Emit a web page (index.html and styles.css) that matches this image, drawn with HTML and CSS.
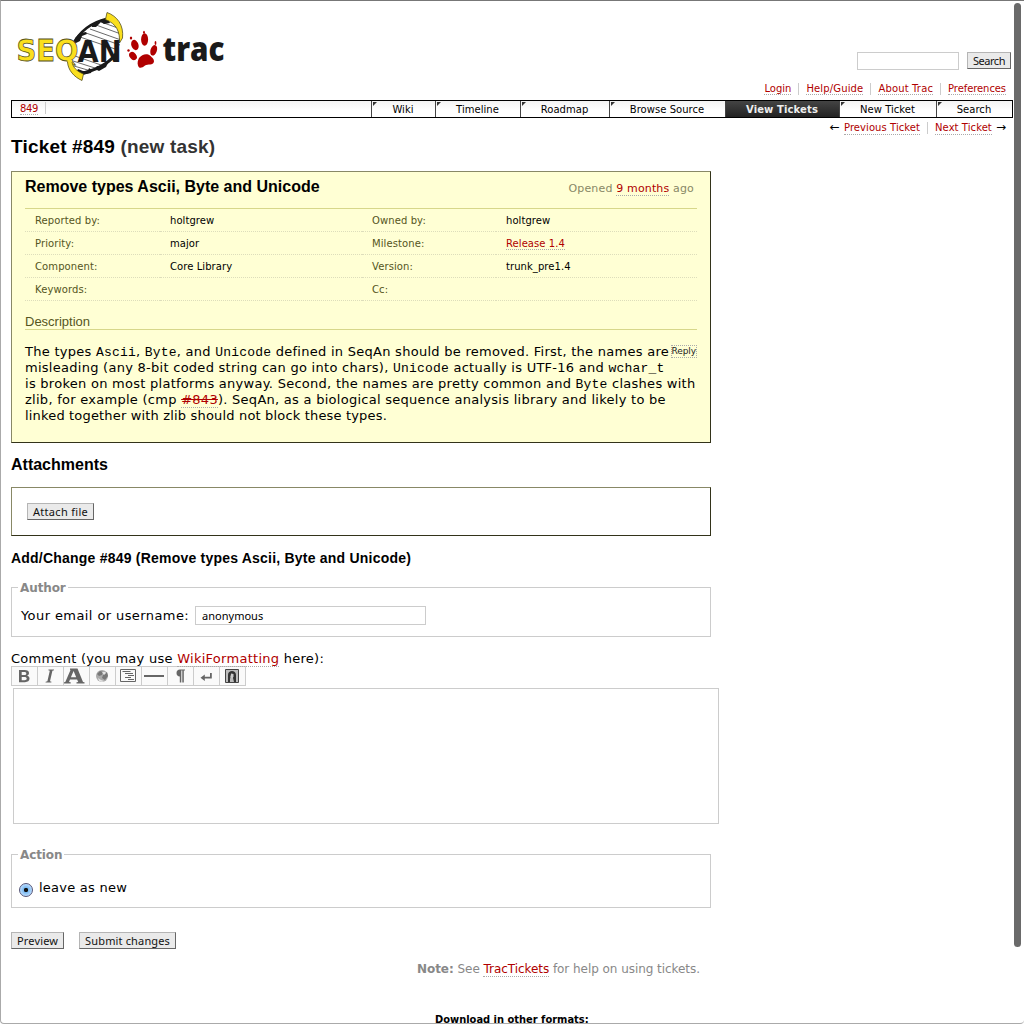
FILE: index.html
```html
<!DOCTYPE html>
<html lang="en">
<head>
<meta charset="utf-8">
<title>#849 (Remove types Ascii, Byte and Unicode)</title>
<link rel="stylesheet" href="styles.css">
</head>
<body>
<div class="page">
  <header class="header">
    <svg class="logo" width="216" height="74" viewBox="14 10 216 74">
      <path d="M107 18C88 23 74 36 70 50C67 60 70 68 80 74C100 69 116 56 120 42C122 30 117 22 107 18Z" fill="#fff"/>
      <path d="M86 33l34 12M90 29l31 11M96 25l25 9M101 22l17 6M80 37l38 13M72 55l32 11M70 60l28 9M74 66l17 5" stroke="#444" stroke-width=".8" fill="none"/>
      <path d="M108 18.500C92 22 79 32 72 46" stroke="#1a1a1a" stroke-width="2.600" fill="none"/>
      <path d="M78 74C95 71 108 64 116 54" stroke="#1a1a1a" stroke-width="3" fill="none"/>
      <path d="M91 25l9-5 8-2 2 5-6 1-3-2-5 5-4 0ZM75 38l5-5 6-1 1 2-5 2-2 5-6 3ZM75 74l3-5 5 2 5 0 1-3 3 2-1 3-9 2ZM95 69l2-3 5 0 2-3 4 0-2 4-7 4Z" fill="#1a1a1a"/>
      <path d="M107 12.500C117 16 124 25 122.500 38L119.500 43C120 32 117 24 105.500 19.500Z" fill="#fadf1d" stroke="#55511f" stroke-width=".8"/>
      <text class="logo-seq" x="16.500" y="61.300" textLength="62" lengthAdjust="spacingAndGlyphs">SEQ</text>
      <path d="M67.500 59.500C67 69 73 77 82 80.500L83.500 74C76 71 72 66 72 60Z" fill="#fadf1d"/>
      <path d="M67.500 62C68 70 74 77 82 80.500L83.500 74C76 71 73 67 72 62" fill="none" stroke="#55511f" stroke-width=".8"/>
      <text class="logo-an" x="77.500" y="61.500" textLength="44" lengthAdjust="spacingAndGlyphs">AN</text>
      <g fill="#b00000">
        <ellipse cx="144.600" cy="39.500" rx="3.500" ry="6.200"/>
        <ellipse cx="134.900" cy="45" rx="3.600" ry="5.300" transform="rotate(-18 134.900 45)"/>
        <ellipse cx="153.700" cy="50.300" rx="3.200" ry="5.400" transform="rotate(18 153.700 50.300)"/>
        <ellipse cx="133" cy="56" rx="3.300" ry="4.500" transform="rotate(-38 133 56)"/>
        <path d="M139 58C142 54 147 53 150 55.500C151 57 154 58 154 61.500C153 66 148 63.500 145 65.500C142 68 139 69 138 65.500C137 63 138 60 139 58Z"/>
        <ellipse cx="144" cy="32.300" rx=".9" ry="1.500"/><ellipse cx="131" cy="38" rx="1.200" ry="1.600"/><ellipse cx="155.500" cy="43" rx=".9" ry="2"/><ellipse cx="128.500" cy="50.500" rx="1.200" ry="1.300"/>
      </g>
      <text class="logo-trac" x="162.500" y="61.300" textLength="62" lengthAdjust="spacingAndGlyphs">trac</text>
    </svg>
    <div class="header-right">
      <form class="search"><input class="search-field" type="text" aria-label="Search"><button class="btn find" type="button">Search</button></form>
      <ul class="metanav">
        <li><a>Login</a></li><li><a class="ls-15">Help/Guide</a></li><li><a class="ls-15">About Trac</a></li><li><a class="ls-neg">Preferences</a></li>
      </ul>
    </div>
  </header>
  <nav class="mainnav">
    <div class="crumb"><a>849</a></div>
    <div class="tab w-wiki">Wiki</div>
    <div class="tab w-time">Timeline</div>
    <div class="tab w-road">Roadmap</div>
    <div class="tab w-src">Browse Source</div>
    <div class="tab w-view active">View Tickets</div>
    <div class="tab w-new">New Ticket</div>
    <div class="tab w-find">Search</div>
  </nav>
  <div class="ctxtnav"><span class="arrow">←</span><a>Previous Ticket</a><i></i><a>Next Ticket</a><span class="arrow">→</span></div>
  <main class="content">
    <h1 class="title">Ticket #849 <span class="status">(new task)</span></h1>
    <section class="ticket">
      <div class="ticket-head"><h2 class="summary">Remove types Ascii, Byte and Unicode</h2><p class="date">Opened <a>9 months</a> ago</p></div>
      <dl class="props">
        <dt>Reported by:</dt><dd>holtgrew</dd><dt>Owned by:</dt><dd>holtgrew</dd>
        <dt>Priority:</dt><dd>major</dd><dt>Milestone:</dt><dd><a>Release 1.4</a></dd>
        <dt>Component:</dt><dd>Core Library</dd><dt>Version:</dt><dd>trunk_pre1.4</dd>
        <dt>Keywords:</dt><dd></dd><dt>Cc:</dt><dd></dd>
      </dl>
      <h3 class="desc-title">Description</h3>
      <div class="desc">
        <button class="reply" type="button">Reply</button>
        <p>The types <code>Ascii</code>, <code>Byte</code>, and <code>Unicode</code> defined in SeqAn should be removed. First, the names are<br>
        misleading (any 8-bit coded string can go into chars), <code>Unicode</code> actually is UTF-16 and <code>wchar_t</code><br>
        is broken on most platforms anyway. Second, the names are pretty common and <code>Byte</code> clashes with<br>
        zlib, for example (cmp <a class="closed">#843</a>). SeqAn, as a biological sequence analysis library and likely to be<br>
        <span class="last-line">linked together with zlib should not block these types.</span></p>
      </div>
    </section>
    <h2 class="section-title">Attachments</h2>
    <section class="attachments"><button class="btn attach" type="button">Attach file</button></section>
    <h2 class="change-title">Add/Change #849 (Remove types Ascii, Byte and Unicode)</h2>
    <fieldset class="group author"><legend>Author</legend><label class="user-label">Your email or username:</label><input class="user-field" type="text" value="anonymous" aria-label="User"></fieldset>
    <p class="comment-label">Comment (you may use <a>WikiFormatting</a> here):</p>
    <div class="toolbar">
      <span><svg viewBox="0 0 25 18"><path fill-rule="evenodd" d="M7 3h5.500c3 0 4.500 1 4.500 3 0 1.500-.8 2.300-2 2.700 1.600.3 2.500 1.300 2.500 2.900 0 2.300-1.700 3.600-4.500 3.600H7ZM9.700 5v3h2.300c1.600 0 2.300-.5 2.300-1.500s-.7-1.500-2-1.500ZM9.700 9.900v3.400h2.800c1.500 0 2.200-.6 2.200-1.700s-.8-1.700-2.300-1.700Z"/></svg></span>
      <span><svg viewBox="0 0 25 18"><path d="M10.500 2.500h5.500v.8l-1.600.4-2.400 10.600 1.500.4-.2.800H7.500l.2-.8 1.700-.4 2.400-10.600-1.500-.4Z"/></svg></span>
      <span><svg viewBox="0 0 25 18"><path fill-rule="evenodd" d="M6 1.500h7.500l5.500 13.500 1.500.3v1.200h-8v-1.200l1.700-.3-1.100-2.500H6l-1 2.500 1.700.3v1.200H0v-1.200l1.300-.3L6.500 3 6 2.700ZM9.600 4l-2.700 6.300h5.300Z"/></svg></span>
      <span><svg viewBox="0 0 25 18"><circle cx="12" cy="9" r="6" fill="#aaa"/><path d="M7 7l3-3 3 1-1 3-3 1ZM13 8l4-3 1 4-3 4-3-2Z" fill="#777"/><path d="M8 11l3 2 3 1-2 1-3-1ZM12 5l3 0 1 1-2 2Z" fill="#e3e3e3"/></svg></span>
      <span><svg viewBox="0 0 25 18"><path d="M4.500 2.500h15v12h-15ZM6.500 4.500h8M9 6.500h8M12 8.500h6M9 10.500h6M12 12.500h6" fill="none" stroke="#666"/></svg></span>
      <span><svg viewBox="0 0 25 18"><path d="M2 8h20v2H2Z"/></svg></span>
      <span><svg viewBox="0 0 25 18"><path d="M12 2.500h5v1h-1.200v12h-1.500V3.500h-1v12h-1.500v-6C9.800 9.500 8.500 8 8.500 6S9.800 2.500 12 2.500Z"/></svg></span>
      <span><svg viewBox="0 0 25 18"><path d="M16 6h1.800v5.500h-7v2.500L6.500 10.700l4.300-3.200v2.300h5.200Z"/></svg></span>
      <span><svg viewBox="0 0 25 18"><path d="M5.500 2.500h13v13h-13Z" fill="#bbb" stroke="#444"/><path d="M8 15V8c0-3 2-4 4-4s4 1.500 4 4v7h-2l-1-4v-3h-2l-1 4v3Z" fill="#333"/><path d="M11 6.500l2.500.5v3l-1.500 1-1.500-1Z" fill="#ccc"/></svg></span>
    </div>
    <textarea class="comment" aria-label="Comment"></textarea>
    <fieldset class="group action"><legend>Action</legend><span class="radio"></span><label class="radio-label">leave as new</label></fieldset>
    <div class="buttons"><button class="btn" type="button">Preview</button><button class="btn" type="button">Submit changes</button></div>
  </main>
  <p class="help"><strong>Note:</strong> See <a>TracTickets</a> for help on using tickets.</p>
  <h3 class="formats">Download in other formats:</h3>
  <div class="scrollbar"></div>
</div>
</body>
</html>
```
FILE: styles.css
```css
* { box-sizing: border-box; }
body { margin: 0; background: #fff; color: #000; font: 13px/16px "DejaVu Sans", sans-serif; }
h1, h2, h3, p, ul, dl, dd { margin: 0; padding: 0; }
button, input { font-family: inherit; }
.page { position: relative; width: 1024px; height: 1024px; overflow: hidden; border: solid #aaa; border-width: 1px 0 1px 1px; border-top-color: #777; border-radius: 0 0 4px 4px; padding: 0 11px 0 10px; white-space: nowrap; }
a { color: #b00000; border-bottom: 1px dotted #aaa; }
.ls-15 { letter-spacing: .15px; }
.ls-neg { letter-spacing: -.08px; }
.header { display: flex; justify-content: space-between; height: 99px; }
.logo { margin: 9px 0 0 3px; overflow: visible; }
.logo-seq, .logo-an { font: bold 30px "DejaVu Sans", sans-serif; }
.logo-seq { fill: #fadf1d; stroke: #55511f; stroke-width: .8px; }
.logo-an { fill: #1a1a1a; }
.logo-trac { font: 800 34px "Open Sans", sans-serif; fill: #1a1a1a; }
.header-right { padding: 51px 2px 0 0; }
.search { display: flex; justify-content: flex-end; gap: 8px; height: 18px; }
.search-field { width: 102px; height: 18px; border: 1px solid #ccc; padding: 0; }
.btn { height: 17px; padding: 0 5px; border: 1px solid; border-color: #b5b5b5 #666 #666 #b5b5b5; background: #eaeaea; color: #111; font: 11px/14px "Noto Sans", sans-serif; letter-spacing: .15px; }
.find { letter-spacing: -.45px; }
.attach { letter-spacing: .3px; }
.metanav { display: flex; justify-content: flex-end; list-style: none; font-size: 10px; line-height: 11px; margin-top: 13px; padding-right: 5px; }
.metanav li { padding: 0 7px; border-left: 1px solid #ccc; height: 12px; }
.metanav li:first-child { border: 0; }
.metanav li:last-child { padding-right: 0; }
.mainnav { display: flex; width: 1002px; height: 18px; border: 1px solid #000; font-size: 10px; line-height: 17px; letter-spacing: .04px; background: linear-gradient(#f3f3f3, #fff 60%); }
.crumb { flex: 1; display: flex; }
.crumb a { margin: 2px 7px 0 8px; height: 12px; line-height: 11px; letter-spacing: -.3px; }
.crumb::after { content: ""; border-left: 1px solid #ccc; height: 12px; margin-top: 1px; }
.tab { position: relative; padding-right: 1px; border-left: 1px solid #444; text-align: center; }
.tab::before { content: ""; position: absolute; left: 1px; top: 1px; width: 0; height: 0; border-top: 4px solid #333; border-right: 4px solid transparent; }
.w-wiki { width: 64px; } .w-time { width: 85px; } .w-road { width: 89px; } .w-src { width: 116px; } .w-view { width: 114px; } .w-new { width: 97px; } .w-find { width: 76px; }
.active { background: linear-gradient(#444, #222); color: #eee; font-weight: bold; letter-spacing: .12px; }
.active::before { display: none; }
.ctxtnav { display: flex; justify-content: flex-end; height: 17px; padding: 4px 3px 0 0; font-size: 10px; line-height: 11px; letter-spacing: .07px; }
.ctxtnav a { height: 13px; }
.ctxtnav i { border-left: 1px solid #ccc; margin: 0 7px; height: 12px; }
.arrow { margin: 0 4px; font-size: 12px; }
.title { font: bold 19px/24px "Liberation Sans", Arial, sans-serif; letter-spacing: .18px; height: 36px; }
.status { color: #333; }
.ticket { width: 700px; height: 272px; border: 1px solid; border-color: #886 #33331a #33331a #886; background: #ffffd4; padding: 5px 13px 0; }
.ticket-head { display: flex; justify-content: space-between; height: 32px; border-bottom: 1px solid #d7d78a; }
.summary { font: bold 16px/20px "Liberation Sans", Arial, sans-serif; }
.date { color: #886; font-size: 11px; letter-spacing: .16px; padding: 4px 3px 0 0; }
.props { display: grid; grid-template-columns: 135px 202px 134px 1fr; grid-auto-rows: 23px; font-size: 10px; line-height: 24px; letter-spacing: .07px; }
.props > * { border-bottom: 1px dotted #ddb; padding-left: 10px; }
.props dt { color: #552; letter-spacing: .1px; }
.props a { display: inline-block; line-height: 11px; }
.desc-title { margin-top: 13px; height: 16px; border-bottom: 1px solid #d7d78a; color: #552; font: 13px/15px "Liberation Sans", Arial, sans-serif; }
.desc { position: relative; padding-top: 14px; letter-spacing: .27px; }
.reply { position: absolute; right: 0; top: 15px; height: 13px; border: 1px dotted #aaa; background: none; font-size: 9px; line-height: 11px; letter-spacing: -.1px; padding: 0; color: #222; }
code { font: 13px "Liberation Mono", monospace; letter-spacing: .2px; }
.closed { text-decoration: line-through; }
.last-line { letter-spacing: .17px; }
.section-title { font: bold 16px/22px "Liberation Sans", Arial, sans-serif; margin-top: 11px; height: 33px; }
.attachments { width: 700px; height: 49px; border: 1px solid; border-color: #886 #33331a #33331a #886; padding: 15px; }
.change-title { font: bold 14px/18px "Liberation Sans", Arial, sans-serif; letter-spacing: .215px; margin-top: 13px; height: 31px; }
.group { position: relative; width: 700px; border: 1px solid #ccc; margin: 0; display: flex; align-items: center; }
.author { height: 57px; padding: 0 9px; }
legend { color: #888; font-size: 12px; font-weight: bold; line-height: 13px; padding: 2px 2px 0; margin-left: -3px; letter-spacing: -.1px; }
.user-label { letter-spacing: .41px; }
.user-field { margin: 0 0 1px 6px; width: 231px; height: 19px; border: 1px solid #ccc; padding: 0 6px; font-family: "Noto Sans", sans-serif; font-size: 11px; }
.comment-label { margin-top: 14px; height: 15px; letter-spacing: .27px; }
.toolbar { display: flex; width: 235px; height: 20px; border: 1px solid #ccc; background: #fafafa; fill: #666; }
.toolbar span { width: 26px; border-right: 1px solid #ccc; }
.toolbar span:last-child { border: 0; }
.toolbar svg { display: block; width: 25px; height: 18px; }
.comment { display: block; margin: 2px 0 23px 2px; width: 706px; height: 136px; border: 1px solid #ccc; resize: none; }
.action { height: 61px; padding: 6px 7px 0; }
legend + .radio { margin-top: 4px; }
.action legend { margin-left: -1px; }
.radio { width: 14px; height: 14px; border: 1px solid #557; border-radius: 50%; background: radial-gradient(circle, #111 0 1.800px, #7bb9f0 2.500px, #bdf 6px); margin-right: 6px; }
.radio-label { letter-spacing: .24px; }
.buttons { display: flex; gap: 15px; margin-top: 24px; }
.help { color: #888; font-size: 12px; letter-spacing: -.05px; text-align: center; margin: 12px 0 0 93px; }
.formats { font-size: 11px; font-stretch: condensed; margin: 35px 0 0 424px; }
.scrollbar { position: absolute; left: 1013px; top: 2px; width: 7px; height: 944px; border-radius: 4px; background: #6a6a6a; }
```
